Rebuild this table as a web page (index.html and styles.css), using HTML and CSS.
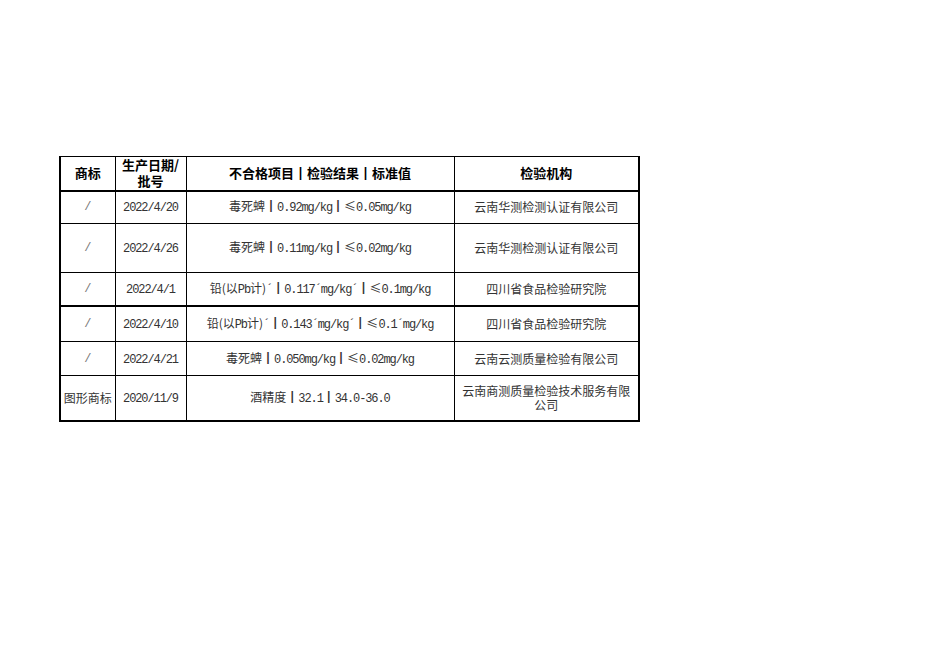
FILE: index.html
```html
<!DOCTYPE html>
<html lang="zh">
<head>
<meta charset="utf-8">
<link rel="stylesheet" href="styles.css">
</head>
<body>
<table class="report">
  <colgroup>
    <col class="c1"><col class="c2"><col class="c3"><col class="c4">
  </colgroup>
  <thead>
    <tr class="h-head">
      <th>商标</th>
      <th>生产日期/<br>批号</th>
      <th>不合格项目┃检验结果┃标准值</th>
      <th>检验机构</th>
    </tr>
  </thead>
  <tbody>
    <tr class="h33">
      <td class="slash">/</td><td><span class="n">2022/4/20</span></td><td>毒死蜱┃<span class="n">0.92mg/kg</span>┃≤<span class="n">0.05mg/kg</span></td><td>云南华测检测认证有限公司</td>
    </tr>
    <tr class="h49">
      <td class="slash">/</td><td><span class="n">2022/4/26</span></td><td>毒死蜱┃<span class="n">0.11mg/kg</span>┃≤<span class="n">0.02mg/kg</span></td><td>云南华测检测认证有限公司</td>
    </tr>
    <tr class="h33 thick">
      <td class="slash">/</td><td><span class="n">2022/4/1</span></td><td>铅(以<span class="n">Pb</span>计)<span class="n">´</span>┃<span class="n">0.117´mg/kg´</span>┃≤<span class="n">0.1mg/kg</span></td><td>四川省食品检验研究院</td>
    </tr>
    <tr class="h36">
      <td class="slash">/</td><td><span class="n">2022/4/10</span></td><td>铅(以<span class="n">Pb</span>计)<span class="n">´</span>┃<span class="n">0.143´mg/kg´</span>┃≤<span class="n">0.1´mg/kg</span></td><td>四川省食品检验研究院</td>
    </tr>
    <tr class="h34">
      <td class="slash">/</td><td><span class="n">2022/4/21</span></td><td>毒死蜱┃<span class="n">0.050mg/kg</span>┃≤<span class="n">0.02mg/kg</span></td><td>云南云测质量检验有限公司</td>
    </tr>
    <tr class="h45">
      <td class="tight">图形商标</td><td><span class="n">2020/11/9</span></td><td>酒精度┃<span class="n">32.1</span>┃<span class="n">34.0-36.0</span></td><td>云南商测质量检验技术服务有限公司</td>
    </tr>
  </tbody>
</table>
</body>
</html>
```

FILE: styles.css
```css
html, body {
  margin: 0;
  padding: 0;
  background: #ffffff;
}

.report {
  margin: 156px 0 0 59px;
  border-collapse: collapse;
  table-layout: fixed;
  width: 581px;
  border-left: 2px solid #000;
  border-right: 2px solid #000;
  border-bottom: 2px solid #000;
  border-top: 1px solid #000;
  font-family: "Noto Sans CJK SC", sans-serif;
  font-size: 12px;
  color: #333;
}

.c1 { width: 55px; }
.c2 { width: 71px; }
.c3 { width: 268px; }
.c4 { width: 185px; }

.report th,
.report td {
  border: 1px solid #000;
  text-align: center;
  vertical-align: middle;
  padding: 0 4px;
  line-height: 14px;
}

.report td.tight {
  padding: 0;
}

.report th {
  font-weight: 700;
  font-size: 13px;
  color: #000;
  line-height: 16px;
  padding: 0 2px;
}

.report thead tr {
  border-bottom: 2px solid #000;
}

.h-head { height: 34px; }
.h33 { height: 33px; }
.h49 { height: 49px; }
.h36 { height: 36px; }
.h34 { height: 34px; }
.h45 { height: 45px; }

.report tr.thick td {
  border-bottom: 2px solid #000;
}

.n {
  font-family: "Liberation Mono", monospace;
  font-size: 12px;
  letter-spacing: -1.1px;
}

.slash {
  color: #777;
  font-family: "Liberation Mono", monospace;
}
```
